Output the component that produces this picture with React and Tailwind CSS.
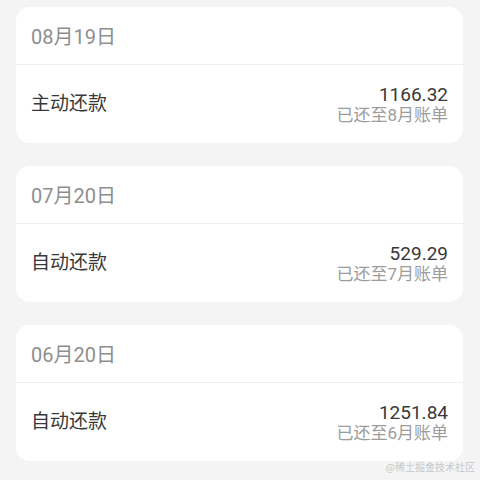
import React from "react";

const items = [
  { date: "08月19日", title: "主动还款", amount: "1166.32", sub: "已还至8月账单" },
  { date: "07月20日", title: "自动还款", amount: "529.29", sub: "已还至7月账单" },
  { date: "06月20日", title: "自动还款", amount: "1251.84", sub: "已还至6月账单" },
];

export default function App() {
  return (
    <div
      className="relative w-[480px] h-[480px] overflow-hidden bg-[#f4f4f4] px-[16px] pt-[7px]"
      style={{ fontFamily: "Roboto, 'Noto Sans CJK SC', sans-serif" }}
    >
      <div className="flex flex-col gap-[23px] w-[447px]">
        {items.map((it) => (
          <div key={it.date} className="bg-white rounded-[14px] overflow-hidden">
            <div className="h-[58px] flex items-center px-[15px] border-b border-[#efefef] text-[20px] text-[#8e8e8e] pt-[3px]">
              {it.date}
            </div>
            <div className="h-[78px] flex items-center justify-between px-[15px]">
              <div className="text-[19px] text-[#383838]">{it.title}</div>
              <div className="flex flex-col items-end leading-[21px] pt-[1px]">
                <div className="text-[19px] text-[#383838]">{it.amount}</div>
                <div className="text-[17px] text-[#9c9c9c]">{it.sub}</div>
              </div>
            </div>
          </div>
        ))}
      </div>
      <div
        className="absolute right-[5px] bottom-[6px] text-[10px] text-[#c8c8c8]"
        style={{ fontFamily: "'Noto Sans CJK SC', sans-serif" }}
      >
        @稀土掘金技术社区
      </div>
    </div>
  );
}
